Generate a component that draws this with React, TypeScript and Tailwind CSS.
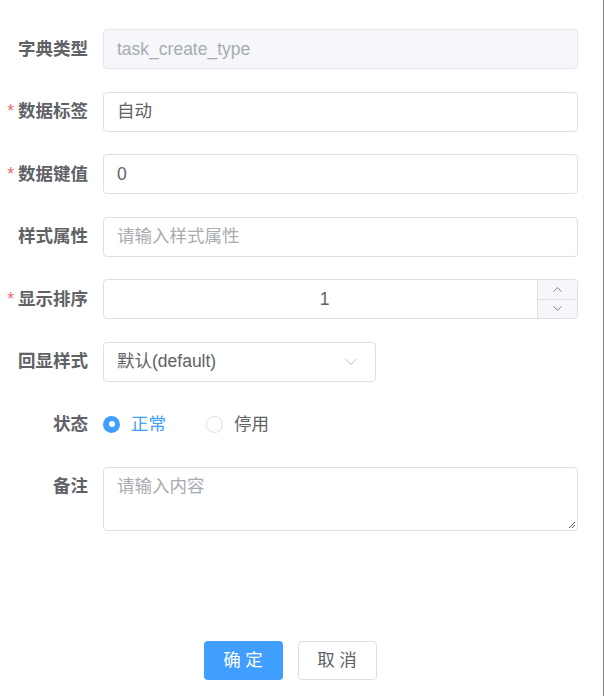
import { ChevronDown, ChevronUp } from "lucide-react";

const font = { fontFamily: '"Liberation Sans", "Noto Sans CJK SC", sans-serif' };

function Label({ text, required }: { text: string; required?: boolean }) {
  return (
    <div className="w-[103px] shrink-0 pr-[15px] flex justify-end items-center h-10 text-[17.5px] font-bold text-[#606266]">
      {required && <span className="text-[#f56c6c] mr-[4px] font-normal">*</span>}
      {text}
    </div>
  );
}

function Row({ children, className = "" }: { children: React.ReactNode; className?: string }) {
  return <div className={`flex items-start mb-[22.5px] ${className}`}>{children}</div>;
}

const inputCls =
  "h-10 w-[475px] rounded-[4px] border border-[#dcdfe6] px-[13px] flex items-center text-[17.5px] text-[#606266]";

export default function App() {
  return (
    <div
      className="w-[604px] h-[696px] bg-white border-r border-[#7d7d7d] flex flex-col pt-[29px]"
      style={font}
    >
      <Row>
        <Label text="字典类型" />
        <div className={`${inputCls} bg-[#f5f7fa] border-[#e4e7ed] text-[#a8abb2]`}>task_create_type</div>
      </Row>
      <Row>
        <Label text="数据标签" required />
        <div className={inputCls}>自动</div>
      </Row>
      <Row>
        <Label text="数据键值" required />
        <div className={inputCls}>0</div>
      </Row>
      <Row>
        <Label text="样式属性" />
        <div className={`${inputCls} text-[#a8abb2]`}>请输入样式属性</div>
      </Row>
      <Row>
        <Label text="显示排序" required />
        <div className="h-10 w-[475px] rounded-[4px] border border-[#dcdfe6] flex text-[17.5px] text-[#606266]">
          <div className="flex-1 flex items-center justify-center pl-[8px]">1</div>
          <div className="w-[40px] flex flex-col border-l border-[#dcdfe6] bg-[#f5f7fa] rounded-r-[4px]">
            <div className="flex-1 flex items-center justify-center border-b border-[#dcdfe6] text-[#606266]">
              <ChevronUp size={15} strokeWidth={1.25} />
            </div>
            <div className="flex-1 flex items-center justify-center text-[#606266]">
              <ChevronDown size={15} strokeWidth={1.25} />
            </div>
          </div>
        </div>
      </Row>
      <Row>
        <Label text="回显样式" />
        <div className="h-10 w-[273px] rounded-[4px] border border-[#dcdfe6] pl-[13px] pr-[14px] flex items-center justify-between text-[17.5px] text-[#606266]">
          <span>默认(default)</span>
          <ChevronDown size={20} strokeWidth={1} className="text-[#a8abb2]" />
        </div>
      </Row>
      <Row>
        <Label text="状态" />
        <div className="h-10 flex items-center text-[17.5px]">
          <div className="flex items-center text-[#409eff]">
            <span className="w-[17px] h-[17px] rounded-full bg-[#409eff] flex items-center justify-center">
              <span className="w-[6px] h-[6px] rounded-full bg-white" />
            </span>
            <span className="ml-[11px]">正常</span>
          </div>
          <div className="flex items-center text-[#606266] ml-[40px]">
            <span className="w-[17px] h-[17px] rounded-full border border-[#dcdfe6] bg-white" />
            <span className="ml-[11px]">停用</span>
          </div>
        </div>
      </Row>
      <Row>
        <Label text="备注" />
        <div className="relative h-[64px] w-[475px] rounded-[4px] border border-[#dcdfe6] px-[13px] pt-[5px] text-[17.5px] text-[#a8abb2]">
          请输入内容
          <svg className="absolute right-[1px] bottom-[1px]" width="9" height="9" viewBox="0 0 9 9">
            <path d="M8 2L2 8M8 5L5 8" stroke="#555" strokeWidth="1" />
          </svg>
        </div>
      </Row>
      <div className="mt-auto mb-[16px] flex justify-center gap-[15px] pr-[23px]">
        <button className="w-[79px] h-[39px] rounded-[4px] bg-[#409eff] text-white text-[17.5px] tracking-[0.25em] pl-[0.25em]">
          确定
        </button>
        <button className="w-[79px] h-[39px] rounded-[4px] border border-[#dcdfe6] bg-white text-[#606266] text-[17.5px] tracking-[0.25em] pl-[0.25em]">
          取消
        </button>
      </div>
    </div>
  );
}
